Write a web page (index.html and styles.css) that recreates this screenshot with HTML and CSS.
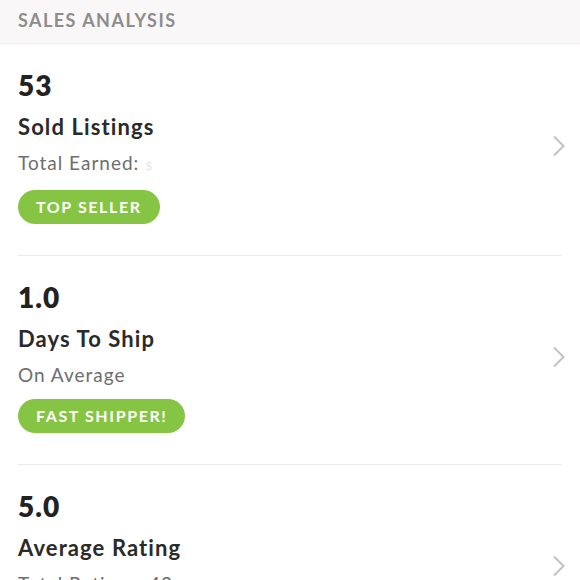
FILE: index.html
```html
<!DOCTYPE html>
<html>
<head>
<meta charset="utf-8">
<link rel="stylesheet" href="styles.css">
</head>
<body>
<div class="header">SALES ANALYSIS</div>
<div class="list">
  <div class="item">
    <div class="info">
      <div class="num">53</div>
      <div class="title">Sold Listings</div>
      <div class="sub">Total Earned: <span class="blur">$</span></div>
      <div class="pill">TOP SELLER</div>
    </div>
    <svg class="chev" width="14" height="22" viewBox="0 0 14 22"><polyline points="2,1.5 11.5,11 2,20.5" fill="none" stroke="#c2c2c2" stroke-width="2"/></svg>
  </div>
  <div class="item">
    <div class="info">
      <div class="num">1.0</div>
      <div class="title">Days To Ship</div>
      <div class="sub">On Average</div>
      <div class="pill">FAST SHIPPER!</div>
    </div>
    <svg class="chev" width="14" height="22" viewBox="0 0 14 22"><polyline points="2,1.5 11.5,11 2,20.5" fill="none" stroke="#c2c2c2" stroke-width="2"/></svg>
  </div>
  <div class="item">
    <div class="info">
      <div class="num">5.0</div>
      <div class="title">Average Rating</div>
      <div class="sub">Total Ratings: 42</div>
      <div class="pill">LOVED</div>
    </div>
    <svg class="chev" width="14" height="22" viewBox="0 0 14 22"><polyline points="2,1.5 11.5,11 2,20.5" fill="none" stroke="#c2c2c2" stroke-width="2"/></svg>
  </div>
</div>
</body>
</html>
```
FILE: styles.css
```css
html, body {
  margin: 0;
  padding: 0;
  background: #ffffff;
  font-family: Lato, "Noto Sans", sans-serif;
  overflow: hidden;
}
.header {
  height: 44px;
  box-sizing: border-box;
  background: #f9f7f7;
  border-bottom: 1px solid #efeded;
  padding: 9px 18px 0;
  font-size: 18px;
  line-height: 22px;
  font-weight: 700;
  color: #8e8c8c;
  letter-spacing: 1.45px;
}
.list {
  padding: 0 18px;
}
.item {
  display: flex;
  align-items: center;
  border-bottom: 1px solid #ebebeb;
  padding: 24px 0 31px;
}
.info {
  flex: 1;
  display: flex;
  flex-direction: column;
  align-items: flex-start;
}
.num {
  font-size: 28px;
  line-height: 34px;
  font-weight: 800;
  color: #222;
  letter-spacing: 1px;
}
.title {
  margin-top: 11px;
  font-size: 22px;
  line-height: 28px;
  font-weight: 700;
  color: #2a2a2a;
  letter-spacing: 1.1px;
}
.sub {
  margin-top: 10px;
  font-size: 19px;
  line-height: 24px;
  color: #6e6e6e;
  letter-spacing: 1px;
}
.blur {
  color: #e6e6e6;
  font-size: 12px;
}
.pill {
  margin-top: 12px;
  height: 34px;
  line-height: 34px;
  padding: 0 18px;
  border-radius: 17px;
  background: #86c443;
  color: #fff;
  font-size: 16px;
  font-weight: 700;
  letter-spacing: 1.6px;
}
.chev {
  margin-right: -4px;
  flex: none;
}
```
